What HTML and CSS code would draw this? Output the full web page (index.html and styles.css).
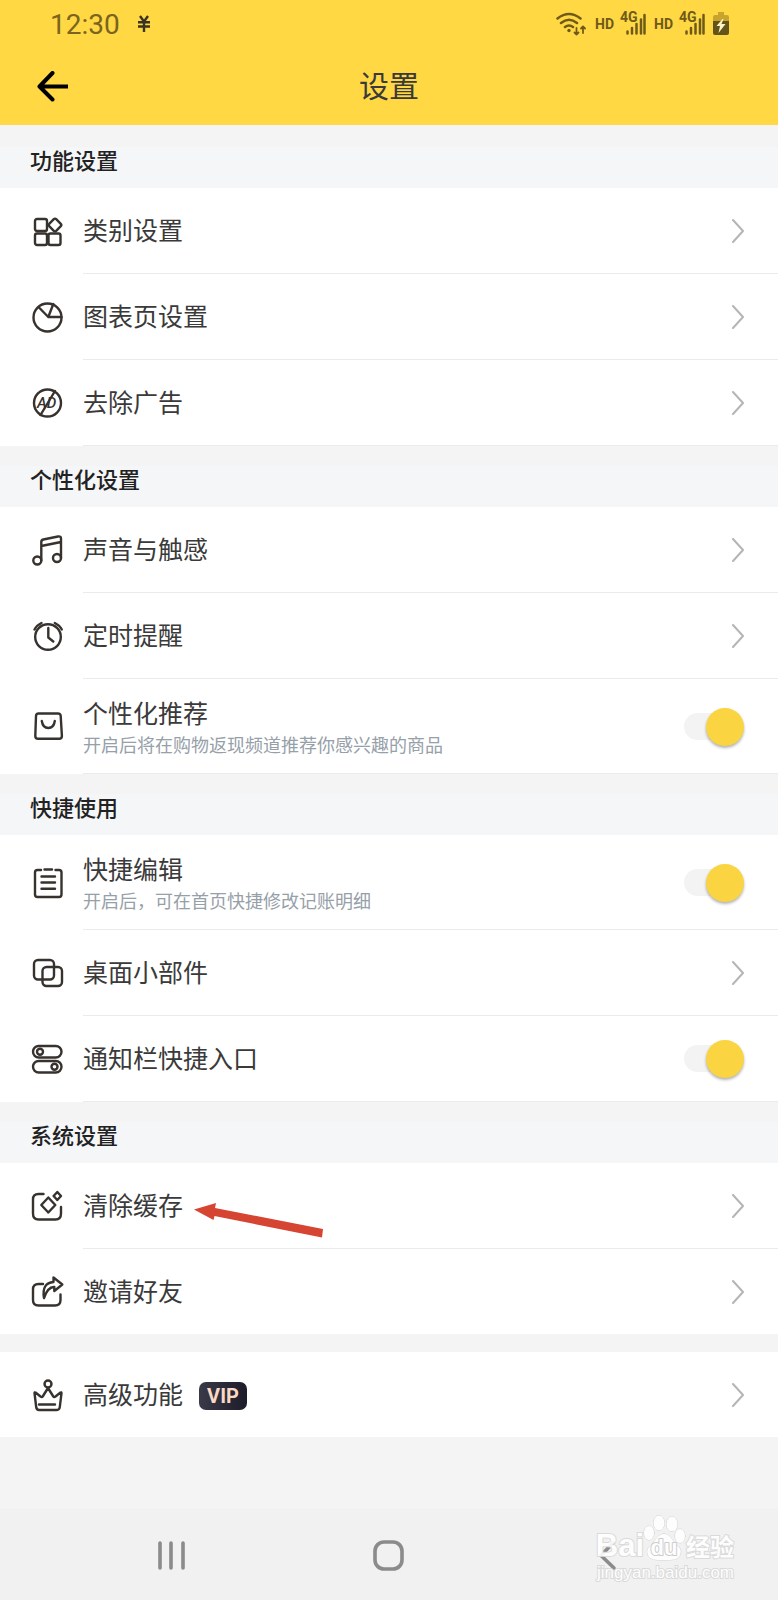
FILE: index.html
```html
<!DOCTYPE html>
<html lang="zh-CN">
<head>
    <meta charset="UTF-8">
    <meta name="viewport" content="width=device-width, initial-scale=1.0">
    <title>设置</title>
    <link rel="stylesheet" href="styles.css">
</head>
<body>
    <svg class="sprite" aria-hidden="true">
        <symbol id="chevron" viewBox="0 0 12 24">
            <path d="M1 1l10 11L1 23"/>
        </symbol>
        <symbol id="signal" viewBox="0 0 20 22">
            <path d="M1.5 18.5v2M6 15v5.5M10.500 11v9.500M15 6.500v14M18.500 2v18.500"/>
        </symbol>
    </svg>

    <!-- Header -->
    <header class="top">
        <div class="status-bar">
            <span class="clock">12:30</span>
            <svg class="yen" width="12" height="18" viewBox="0 0 12 18"><path d="M2 1l4 5.500L10 1M6 6v11M0 7.200h12M0 11.500h12"/></svg>
            <div class="status-icons">
                <svg class="wifi" width="31" height="24" viewBox="0 0 31 24">
                    <path d="M1.500 6.500Q13 -2.500 24.500 6.500M5 11q8-6.500 16 0M9 15q4-3 8 0"/>
                    <circle cx="13" cy="18.500" r="1.700"/>
                    <path class="thin" d="M20.500 16v6.500M18.500 20.500l2 2 2-2M27 21v-6.500M25 16.500l2-2 2 2"/>
                </svg>
                <span class="hd">HD</span>
                <span class="cell"><span class="net">4G</span><svg class="bars" width="20" height="22"><use href="#signal"/></svg></span>
                <span class="hd">HD</span>
                <span class="cell"><span class="net">4G</span><svg class="bars" width="20" height="22"><use href="#signal"/></svg></span>
                <svg class="battery" width="16" height="24" viewBox="0 0 16 24">
                    <path fill="#c9a42c" d="M5 0h6v3h3a2 2 0 0 1 2 2v4H0V5a2 2 0 0 1 2-2h3z"/>
                    <path fill="#65541a" d="M0 9h16v12a2 2 0 0 1-2 2H2a2 2 0 0 1-2-2z"/>
                    <path fill="#fff3c4" d="M9.500 7L3.500 14h3.500l-1.500 7 7-9H8.500l2-5z"/>
                </svg>
            </div>
        </div>
        <div class="title-bar">
            <button class="back-btn" type="button" aria-label="返回">
                <svg width="32" height="32" viewBox="0 0 32 32"><path d="M16.500 2L3.500 15.500l13 13M3.500 15.500h28"/></svg>
            </button>
            <h1>设置</h1>
        </div>
    </header>

    <main class="settings">
        <section>
            <h2>功能设置</h2>
            <a class="row" href="#">
                <svg class="icon" viewBox="0 0 32 32">
                    <rect x="4" y="4" width="12" height="12" rx="2"/>
                    <rect x="4" y="18.500" width="12" height="11.500" rx="2"/>
                    <rect x="17.500" y="18.500" width="12" height="11.500" rx="2"/>
                    <path d="M22.800 4.200q1.200-1.200 2.400 0l4.600 4.600q1.200 1.200 0 2.400l-4.600 4.600q-1.200 1.200-2.400 0l-4.600-4.600q-1.200-1.200 0-2.400z"/>
                </svg>
                <span class="body"><span class="label">类别设置</span></span>
                <svg class="chevron"><use href="#chevron"/></svg>
            </a>
            <a class="row" href="#">
                <svg class="icon" viewBox="0 0 32 32">
                    <circle cx="16.500" cy="16.500" r="14"/>
                    <path d="M7.500 6l9.800 10 5-13M17.300 16h13.200"/>
                </svg>
                <span class="body"><span class="label">图表页设置</span></span>
                <svg class="chevron"><use href="#chevron"/></svg>
            </a>
            <a class="row" href="#">
                <svg class="icon" viewBox="0 0 32 32">
                    <circle cx="16.500" cy="16" r="13.500"/>
                    <path d="M9.500 28L24 4"/>
                    <text x="6" y="21">AD</text>
                </svg>
                <span class="body"><span class="label">去除广告</span></span>
                <svg class="chevron"><use href="#chevron"/></svg>
            </a>
        </section>

        <section>
            <h2>个性化设置</h2>
            <a class="row" href="#">
                <svg class="icon" viewBox="0 0 32 32">
                    <circle cx="6.300" cy="26.500" r="4"/>
                    <circle cx="26" cy="24" r="4"/>
                    <path d="M10.300 26.500V8q0-2 2-2.500l14.700-3q3-.5 3 2V24M10.300 12L30 8"/>
                </svg>
                <span class="body"><span class="label">声音与触感</span></span>
                <svg class="chevron"><use href="#chevron"/></svg>
            </a>
            <a class="row" href="#">
                <svg class="icon" viewBox="0 0 32 32">
                    <circle cx="17" cy="17" r="12.800"/>
                    <path d="M17.300 8v9.500l5 4M3.500 9.500q2-4 7-6.500M30.800 9.500q-2-4-7-6.500"/>
                </svg>
                <span class="body"><span class="label">定时提醒</span></span>
                <svg class="chevron"><use href="#chevron"/></svg>
            </a>
            <label class="row tall">
                <svg class="icon" viewBox="0 0 32 32">
                    <path d="M7.500 2.500h19.500q2.500 0 2.700 2.500l1.200 20q0 2.700-2.700 2.700H7q-2.700 0-2.700-2.700L5 5q.2-2.500 2.500-2.500z"/>
                    <path d="M10.800 10q1 7 6.500 7t6.500-7"/>
                </svg>
                <span class="body">
                    <span class="label">个性化推荐</span>
                    <span class="hint">开启后将在购物返现频道推荐你感兴趣的商品</span>
                </span>
                <input class="switch" type="checkbox" checked>
            </label>
        </section>

        <section>
            <h2>快捷使用</h2>
            <label class="row tall">
                <svg class="icon" viewBox="0 0 32 32">
                    <path d="M10 3H6.500Q4 3 4 5.500v22Q4 30 6.500 30h21.500q2.500 0 2.500-2.500v-22Q30.500 3 28 3h-3.500M13.500 2.500h7.500M10.500 9.500H24M10.500 15.500H24M10.500 21.700H24"/>
                </svg>
                <span class="body">
                    <span class="label">快捷编辑</span>
                    <span class="hint">开启后，可在首页快捷修改记账明细</span>
                </span>
                <input class="switch" type="checkbox" checked>
            </label>
            <a class="row" href="#">
                <svg class="icon" viewBox="0 0 32 32">
                    <rect x="3" y="3" width="20" height="19.500" rx="4"/>
                    <rect x="11.500" y="10" width="19.500" height="19" rx="4"/>
                </svg>
                <span class="body"><span class="label">桌面小部件</span></span>
                <svg class="chevron"><use href="#chevron"/></svg>
            </a>
            <label class="row">
                <svg class="icon" viewBox="0 0 32 32">
                    <rect x="2" y="3" width="28.500" height="11.500" rx="5.700"/>
                    <rect x="2" y="18" width="28.500" height="11.500" rx="5.700"/>
                    <circle cx="9" cy="8.700" r="3"/>
                    <circle cx="23.500" cy="23.700" r="3"/>
                </svg>
                <span class="body"><span class="label">通知栏快捷入口</span></span>
                <input class="switch" type="checkbox" checked>
            </label>
        </section>

        <section>
            <h2>系统设置</h2>
            <a class="row" href="#">
                <svg class="icon" viewBox="0 0 32 32">
                    <path d="M12.500 4H7.500Q2 4 2 9.500v14Q2 29.500 7.500 29.500h17q5.500 0 5.500-6V17M17.300 7.500l7 7.500-7 7.500-7-7.500zM26.300 2l3.700 4-3.700 4-3.700-4z"/>
                </svg>
                <span class="body"><span class="label">清除缓存</span></span>
                <svg class="chevron"><use href="#chevron"/></svg>
                <svg class="pointer" width="130" height="36" viewBox="0 0 130 36">
                    <path d="M0 6.500L22 0l-1 5 108 21-1 8.500L20.500 13l-1 4z"/>
                </svg>
            </a>
            <a class="row last" href="#">
                <svg class="icon" viewBox="0 0 32 32">
                    <path d="M12 8H7.500Q2 8 2 13.500V24q0 5.500 5.500 5.500H24q5.500 0 5.500-5.500v-5.500"/>
                    <path d="M22.500 1.500l8.800 7-8 6.500v-4Q17 10.500 13 22 10.500 7 22.500 6z"/>
                </svg>
                <span class="body"><span class="label">邀请好友</span></span>
                <svg class="chevron"><use href="#chevron"/></svg>
            </a>
        </section>

        <section class="extra">
            <a class="row last" href="#">
                <svg class="icon" viewBox="0 0 32 32">
                    <circle cx="17" cy="5" r="3.500"/>
                    <path d="M17 9l-5 8q-1 1.500-2.500.5l-5-4q-1-.5-1 .5l1.700 14q.3 3 3 3h17.600q2.700 0 3-3l1.700-14q0-1-1-.5l-5 4q-1.500 1-2.500-.5zM8 25.500h16"/>
                </svg>
                <span class="body"><span class="label">高级功能<span class="vip">VIP</span></span></span>
                <svg class="chevron"><use href="#chevron"/></svg>
            </a>
        </section>
    </main>

    <!-- System navigation -->
    <nav class="nav-bar">
        <button type="button" aria-label="最近任务"><svg width="30" height="32" viewBox="0 0 30 32"><path d="M4 4v25M15 4v25M27 4v25"/></svg></button>
        <button type="button" aria-label="主页"><svg width="32" height="32" viewBox="0 0 32 32"><rect x="2" y="3" width="27" height="27" rx="9"/></svg></button>
        <button type="button" aria-label="返回"><svg width="32" height="32" viewBox="0 0 32 32"><path d="M22 4L10 16.500 23 29"/></svg></button>
        <div class="watermark">
            <div class="brand">
                <span>Bai</span>
                <svg width="42" height="46" viewBox="0 0 42 46">
                    <ellipse cx="5" cy="18" rx="5" ry="7"/>
                    <ellipse cx="15" cy="8" rx="5.500" ry="7.500"/>
                    <ellipse cx="28" cy="9" rx="5.500" ry="7.500"/>
                    <ellipse cx="36" cy="21" rx="5" ry="7"/>
                    <path d="M20 19c6 0 8 6 12 10s6 6 4 11-8 5-16 5-14 0-16-5 0-7 4-11 6-10 12-10z"/>
                    <text x="20" y="40">du</text>
                </svg>
                <span class="brand-cn">经验</span>
            </div>
            <div class="url">jingyan.baidu.com</div>
        </div>
    </nav>
</body>
</html>
```
FILE: styles.css
```css
* {
    box-sizing: border-box;
}

body {
    margin: 0;
    min-height: 100vh;
    display: flex;
    flex-direction: column;
    background: #f4f4f4;
    color: #3a3a3a;
    font-family: Roboto, "Noto Sans CJK SC", sans-serif;
}

button {
    padding: 0;
    border: none;
    background: none;
    cursor: pointer;
}

svg {
    display: block;
    flex: none;
    fill: none;
    stroke-linecap: round;
    stroke-linejoin: round;
}

.sprite {
    position: absolute;
    width: 0;
    height: 0;
}

/* Header */
.top {
    background: #ffd843;
}

.status-bar {
    display: flex;
    align-items: center;
    height: 48px;
    padding: 0 49px 0 50px;
    color: #7a6420;
}

.clock {
    padding-top: 2px;
    font-size: 28px;
    line-height: 46px;
}

.yen {
    margin-left: 18px;
    stroke: #3a3222;
    stroke-width: 2.4;
    stroke-linecap: butt;
}

.status-icons {
    display: flex;
    align-items: center;
    margin-left: auto;
    gap: 8px;
    color: #6f5a1a;
}

.wifi {
    stroke: #6f5a1a;
    stroke-width: 2.5;
}

.wifi circle {
    fill: #6f5a1a;
    stroke: none;
}

.wifi .thin {
    stroke-width: 1.8;
}

.hd {
    font-size: 14px;
    font-weight: 700;
}

.cell {
    position: relative;
    padding-left: 4px;
}

.net {
    position: absolute;
    left: -2px;
    top: -4px;
    font-size: 14px;
    line-height: 16px;
    font-weight: 700;
}

.bars {
    stroke: #6f5a1a;
    stroke-width: 2.5;
}

.title-bar {
    display: grid;
    grid-template-columns: 1fr auto 1fr;
    align-items: center;
    height: 77px;
    padding: 0 36px;
}

.back-btn {
    width: 32px;
    height: 32px;
}

.back-btn svg {
    stroke: #000;
    stroke-width: 4;
}

h1 {
    margin: 0;
    font-size: 30px;
    line-height: 44px;
    font-weight: 400;
}

/* Settings list */
.settings {
    flex: 1;
    padding-top: 2px;
}

h2 {
    margin: 20px 0 0;
    padding: 0 30px 11px;
    background: #f5f6f8;
    color: #222;
    font-size: 22px;
    line-height: 30px;
    font-weight: 500;
}

.extra {
    margin-top: 18px;
}

.row {
    position: relative;
    display: flex;
    align-items: center;
    height: 86px;
    padding: 0 34px 0 31px;
    background: #fff;
    color: inherit;
    text-decoration: none;
    cursor: pointer;
}

.row::after {
    content: "";
    position: absolute;
    left: 83px;
    right: 0;
    bottom: 0;
    height: 1px;
    background: #ebebeb;
}

.row.tall {
    height: 95px;
}

.row.last {
    height: 85px;
}

.row.last::after {
    display: none;
}

.icon {
    width: 32px;
    height: 32px;
    margin-right: 20px;
    overflow: visible;
    stroke: #37322e;
    stroke-width: 2.4;
}

.icon text {
    fill: #37322e;
    stroke: none;
    font-size: 15px;
    font-weight: 500;
    font-style: italic;
}

.body {
    flex: 1;
    display: flex;
    flex-direction: column;
    padding-top: 2px;
}

.label {
    display: flex;
    align-items: center;
    font-size: 25px;
    line-height: 36px;
}

.hint {
    color: #96a0a8;
    font-size: 18px;
    line-height: 26px;
}

.chevron {
    width: 12px;
    height: 24px;
    stroke: #b5b5b5;
    stroke-width: 2;
}

.vip {
    width: 48px;
    height: 28px;
    margin-left: 16px;
    border-radius: 7px;
    background: linear-gradient(90deg, #3a3948, #1d1c2b);
    color: #f9d8c4;
    font-size: 20px;
    line-height: 28px;
    font-weight: 700;
    text-align: center;
}

.switch {
    appearance: none;
    position: relative;
    width: 60px;
    height: 38px;
    margin: 0;
    cursor: pointer;
}

.switch::before {
    content: "";
    position: absolute;
    inset: 5px 10px 6px 0;
    border-radius: 14px;
    background: #f3f3f3;
}

.switch::after {
    content: "";
    position: absolute;
    top: 0;
    left: 0;
    width: 38px;
    height: 38px;
    border-radius: 50%;
    background: #fff;
    box-shadow: 0 2px 3px rgba(0, 0, 0, 0.3);
}

.switch:checked::after {
    left: 22px;
    background: #fad541;
}

.pointer {
    position: absolute;
    left: 194px;
    top: 40px;
    fill: #d64432;
}

/* System navigation */
.nav-bar {
    position: relative;
    display: grid;
    grid-template-columns: repeat(3, 1fr);
    align-items: center;
    justify-items: center;
    height: 91px;
    padding: 0 8%;
    background: #f1f1f1;
}

.nav-bar button svg {
    stroke: #8b8b8b;
    stroke-width: 3.6;
}

.watermark {
    position: absolute;
    right: 44px;
    bottom: 15px;
    color: #fff;
    -webkit-text-stroke: 2px #d8d8d8;
    paint-order: stroke fill;
    opacity: 0.9;
}

.brand {
    display: flex;
    align-items: flex-end;
    font-family: "Liberation Sans", sans-serif;
    font-size: 31px;
    line-height: 30px;
    font-weight: 700;
}

.brand svg {
    fill: #fff;
    stroke: #cfcfcf;
    stroke-width: 1;
    overflow: visible;
}

.brand text {
    fill: #fff;
    stroke: #c8c8c8;
    stroke-width: 2;
    font-size: 22px;
    text-anchor: middle;
}

.brand-cn {
    font-family: "Noto Sans CJK SC", sans-serif;
    font-size: 24px;
}

.url {
    font-family: "Liberation Sans", sans-serif;
    font-size: 17px;
    line-height: 24px;
    text-align: right;
}
```
